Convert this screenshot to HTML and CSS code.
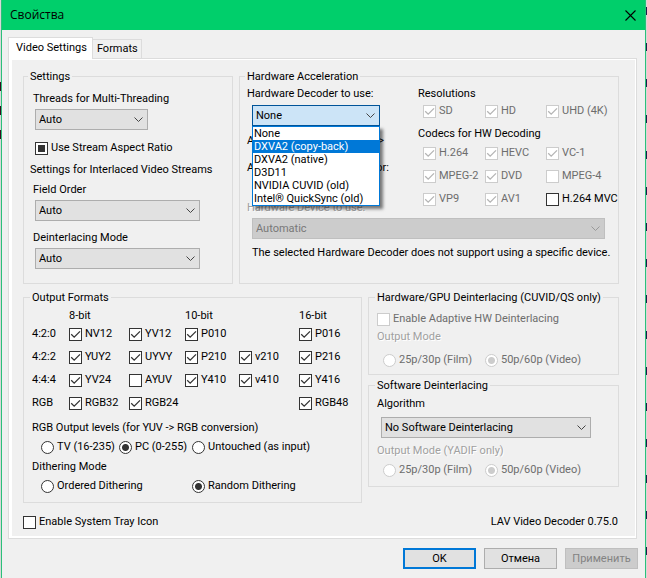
FILE: index.html
```html
<!DOCTYPE html>
<html lang="ru">

<head>
    <meta charset="UTF-8">
    <meta name="viewport" content="width=device-width, initial-scale=1.0">
    <title>Свойства</title>
    <link rel="stylesheet" href="styles.css">
</head>

<body>
    <div class="window">
        <header class="titlebar">
            <h1>Свойства</h1>
            <button type="button" class="close" aria-label="Закрыть">
                <svg width="11" height="11" viewBox="0 0 11 11">
                    <path d="M0.5 0.5 L10.5 10.5 M10.5 0.5 L0.5 10.5" stroke="#000" stroke-width="1.1" fill="none" />
                </svg>
            </button>
        </header>

        <div class="tabs">
            <button type="button" class="tab active">Video Settings</button>
            <button type="button" class="tab">Formats</button>
        </div>

        <main class="panel">
            <div class="top-row">
                <fieldset class="settings">
                    <legend>Settings</legend>
                    <label class="title" for="threads">Threads for Multi-Threading</label>
                    <select id="threads" class="short">
                        <option>Auto</option>
                    </select>
                    <label class="check aspect"><input type="checkbox" id="aspect">Use Stream Aspect Ratio</label>
                    <p class="interlaced">Settings for Interlaced Video Streams</p>
                    <label class="title" for="fieldOrder">Field Order</label>
                    <select id="fieldOrder">
                        <option>Auto</option>
                    </select>
                    <label class="title spaced" for="deintMode">Deinterlacing Mode</label>
                    <select id="deintMode">
                        <option>Auto</option>
                    </select>
                </fieldset>

                <fieldset class="hardware">
                    <legend>Hardware Acceleration</legend>
                    <div class="hw-columns">
                        <div class="decoder">
                            <label for="decoder">Hardware Decoder to use:</label>
                            <div class="combo">
                                <select id="decoder" class="open">
                                    <option>None</option>
                                </select>
                                <ul class="menu">
                                    <li>None</li>
                                    <li class="selected">DXVA2 (copy-back)</li>
                                    <li>DXVA2 (native)</li>
                                    <li>D3D11</li>
                                    <li>NVIDIA CUVID (old)</li>
                                    <li>Intel® QuickSync (old)</li>
                                </ul>
                            </div>
                            <p class="status"><span>Active Decoder:</span><span>&lt;inactive&gt;</span></p>
                            <p class="status">Active Hardware Accelerator:</p>
                            <label class="etched device-label" for="device">Hardware Device to use:</label>
                        </div>
                        <div>
                            <p>Resolutions</p>
                            <div class="codec-grid resolutions">
                                <label class="check"><input type="checkbox" checked disabled>SD</label>
                                <label class="check"><input type="checkbox" checked disabled>HD</label>
                                <label class="check"><input type="checkbox" checked disabled>UHD (4K)</label>
                            </div>
                            <p>Codecs for HW Decoding</p>
                            <div class="codec-grid codecs">
                                <label class="check"><input type="checkbox" checked disabled>H.264</label>
                                <label class="check"><input type="checkbox" checked disabled>HEVC</label>
                                <label class="check"><input type="checkbox" checked disabled>VC-1</label>
                                <label class="check"><input type="checkbox" checked disabled>MPEG-2</label>
                                <label class="check"><input type="checkbox" checked disabled>DVD</label>
                                <label class="check"><input type="checkbox" disabled>MPEG-4</label>
                                <label class="check"><input type="checkbox" checked disabled>VP9</label>
                                <label class="check"><input type="checkbox" checked disabled>AV1</label>
                                <label class="check"><input type="checkbox">H.264 MVC</label>
                            </div>
                        </div>
                    </div>
                    <select id="device" class="device" disabled>
                        <option>Automatic</option>
                    </select>
                    <p class="note">The selected Hardware Decoder does not support using a specific device.</p>
                </fieldset>
            </div>

            <div class="bottom-row">
                <fieldset class="output">
                    <legend>Output Formats</legend>
                    <div class="formats">
                        <span class="eight">8-bit</span>
                        <span class="ten">10-bit</span>
                        <span class="sixteen">16-bit</span>

                        <span class="row-name">4:2:0</span>
                        <label class="check"><input type="checkbox" checked>NV12</label>
                        <label class="check"><input type="checkbox" checked>YV12</label>
                        <label class="check"><input type="checkbox" checked>P010</label>
                        <label class="check sixteen"><input type="checkbox" checked>P016</label>

                        <span class="row-name">4:2:2</span>
                        <label class="check"><input type="checkbox" checked>YUY2</label>
                        <label class="check"><input type="checkbox" checked>UYVY</label>
                        <label class="check"><input type="checkbox" checked>P210</label>
                        <label class="check"><input type="checkbox" checked>v210</label>
                        <label class="check"><input type="checkbox" checked>P216</label>

                        <span class="row-name">4:4:4</span>
                        <label class="check"><input type="checkbox" checked>YV24</label>
                        <label class="check"><input type="checkbox">AYUV</label>
                        <label class="check"><input type="checkbox" checked>Y410</label>
                        <label class="check"><input type="checkbox" checked>v410</label>
                        <label class="check"><input type="checkbox" checked>Y416</label>

                        <span class="row-name">RGB</span>
                        <label class="check"><input type="checkbox" checked>RGB32</label>
                        <label class="check"><input type="checkbox" checked>RGB24</label>
                        <label class="check sixteen"><input type="checkbox" checked>RGB48</label>
                    </div>
                    <p class="levels-title">RGB Output levels (for YUV -&gt; RGB conversion)</p>
                    <div class="radios levels">
                        <label class="check"><input type="radio" name="levels">TV (16-235)</label>
                        <label class="check"><input type="radio" name="levels" checked>PC (0-255)</label>
                        <label class="check"><input type="radio" name="levels">Untouched (as input)</label>
                    </div>
                    <p>Dithering Mode</p>
                    <div class="radios dithering">
                        <label class="check"><input type="radio" name="dither">Ordered Dithering</label>
                        <label class="check"><input type="radio" name="dither" checked>Random Dithering</label>
                    </div>
                </fieldset>

                <div class="deint">
                    <fieldset class="hw-deint">
                        <legend>Hardware/GPU Deinterlacing (CUVID/QS only)</legend>
                        <label class="check"><input type="checkbox" disabled>Enable Adaptive HW Deinterlacing</label>
                        <p class="etched">Output Mode</p>
                        <div class="modes">
                            <label class="check"><input type="radio" name="hwMode" disabled>25p/30p (Film)</label>
                            <label class="check"><input type="radio" name="hwMode" checked disabled>50p/60p (Video)</label>
                        </div>
                    </fieldset>
                    <fieldset class="sw-deint">
                        <legend>Software Deinterlacing</legend>
                        <label for="algorithm">Algorithm</label>
                        <select id="algorithm" class="algorithm">
                            <option>No Software Deinterlacing</option>
                        </select>
                        <p class="etched">Output Mode (YADIF only)</p>
                        <div class="modes">
                            <label class="check"><input type="radio" name="swMode" disabled>25p/30p (Film)</label>
                            <label class="check"><input type="radio" name="swMode" checked disabled>50p/60p (Video)</label>
                        </div>
                    </fieldset>
                </div>
            </div>

            <div class="panel-footer">
                <label class="check"><input type="checkbox">Enable System Tray Icon</label>
                <span class="version">LAV Video Decoder 0.75.0</span>
            </div>
        </main>

        <footer class="buttons">
            <button type="button" class="btn primary">OK</button>
            <button type="button" class="btn">Отмена</button>
            <button type="button" class="btn" disabled>Применить</button>
        </footer>
    </div>

    <script>
        document.getElementById("aspect").indeterminate = true;
    </script>
</body>

</html>
```
FILE: styles.css
```css
* {
    box-sizing: border-box;
}

/* the desktop shows as a thin strip on both sides of the window */
body {
    margin: 0;
    padding: 0 1px;
    background-color: #d8d8d8;
    background-image:
        linear-gradient(#3a0a1e 9px, transparent 9px, transparent 24px, #3a0a1e 24px, #3a0a1e 33px, transparent 33px, transparent 48px, #3a0a1e 48px),
        linear-gradient(#1c1c4a 8px, transparent 8px);
    background-size: 1px 57px, 1px 36px;
    background-position: 0 82px, right 7px;
    background-repeat: no-repeat, repeat-y;
    font-family: Roboto, "Liberation Sans", sans-serif;
    font-size: 11px;
    line-height: 14px;
    color: #000;
    white-space: nowrap;
}

button,
select {
    font: inherit;
    color: inherit;
}

p,
ul {
    margin: 0;
    padding: 0;
}

label,
p {
    display: block;
}

.window {
    min-height: 100vh;
    padding-bottom: 7px;
    background-color: #f0f0f0;
    border: 1px solid #2bc07a;
    border-top: none;
    border-bottom: none;
}

.titlebar {
    display: flex;
    justify-content: space-between;
    align-items: center;
    height: 30px;
    padding: 0 9px 0 8px;
    background-color: #00cf6b;
}

.titlebar h1 {
    margin: 0;
    font-family: "Open Sans", sans-serif;
    font-size: 12px;
    font-weight: normal;
}

.close {
    display: flex;
    padding: 0;
    border: none;
    background: none;
}

/* tabs */
.tabs {
    display: flex;
    align-items: flex-end;
    padding: 7px 0 0 6px;
}

.tab {
    height: 19px;
    padding: 0 3px 0 4px;
    border: 1px solid #dcdcdc;
    border-left: none;
    border-bottom: none;
    background-color: #f0f0f0;
}

.tab.active {
    position: relative;
    height: 22px;
    margin-bottom: -1px;
    padding: 0 5px 2px 7px;
    border-left: 1px solid #dcdcdc;
    background-color: #fff;
}

.panel {
    margin: 0 8px 0 6px;
    padding: 10px 17px 9px 14px;
    border: 1px solid #dcdcdc;
    background-color: #f0f0f0;
    box-shadow: inset 3px 1px #fff, inset -1px -2px #fff;
}

/* group boxes */
fieldset {
    min-width: 0;
    margin: 0;
    padding: 0;
    border: 1px solid #dcdcdc;
}

legend {
    height: 15px;
    margin-left: -2px;
    padding: 1px 2px 0;
}

.top-row {
    display: grid;
    grid-template-columns: 210px 1fr;
    gap: 6px;
}

.bottom-row {
    display: grid;
    grid-template-columns: 339px 1fr;
    gap: 6px;
    margin-top: 6px;
}

/* drop-downs */
select {
    display: block;
    width: 165px;
    height: 21px;
    padding: 0 3px;
    border: 1px solid #adadad;
    border-radius: 0;
    appearance: none;
    background: #e1e1e1 url("data:image/svg+xml,%3Csvg xmlns='http://www.w3.org/2000/svg' width='9' height='5'%3E%3Cpath d='M.5 .5L4.5 4.5L8.5 .5' fill='none' stroke='%23444'/%3E%3C/svg%3E") no-repeat right 4px center;
}

select:disabled {
    border-color: #bfbfbf;
    background-color: #ccc;
    background-image: url("data:image/svg+xml,%3Csvg xmlns='http://www.w3.org/2000/svg' width='9' height='5'%3E%3Cpath d='M.5 .5L4.5 4.5L8.5 .5' fill='none' stroke='%23999'/%3E%3C/svg%3E");
    color: #787878;
    opacity: 1;
}

select.short {
    width: 113px;
}

select.open {
    width: 128px;
    border-color: #005499;
    background-color: #cce4f7;
}

.combo {
    position: relative;
    width: 128px;
    margin: 4px 0 8px 5px;
}

.menu {
    position: absolute;
    top: 21px;
    left: 0;
    right: 0;
    z-index: 1;
    border: 1px solid #0078d7;
    background-color: #fff;
    box-shadow: 3px 3px 3px rgba(0, 0, 0, 0.5);
    list-style: none;
    line-height: 12px;
}

.menu li {
    padding: 1px 0 0 1px;
}

.menu .selected {
    background-color: #0078d7;
    color: #fff;
}

/* tick boxes and radios */
.check {
    display: flex;
    align-items: center;
    gap: 3px;
    height: 14px;
}

.check:has(:disabled) {
    color: #6d6d6d;
}

input {
    flex: none;
    width: 13px;
    height: 13px;
    margin: 0;
    border: 1px solid #333;
    appearance: none;
    background: #fff no-repeat center;
}

input:disabled {
    border-color: #ccc;
}

input[type="checkbox"]:checked {
    background-image: url("data:image/svg+xml,%3Csvg xmlns='http://www.w3.org/2000/svg' width='11' height='11'%3E%3Cpath d='M1.2 5.2L4.2 8.2L10 2.4' fill='none' stroke='%23333' stroke-width='1.3'/%3E%3C/svg%3E");
}

input[type="checkbox"]:checked:disabled {
    background-image: url("data:image/svg+xml,%3Csvg xmlns='http://www.w3.org/2000/svg' width='11' height='11'%3E%3Cpath d='M1.2 5.2L4.2 8.2L10 2.4' fill='none' stroke='%23b4b4b4' stroke-width='1.3'/%3E%3C/svg%3E");
}

input:indeterminate[type="checkbox"] {
    background-image: linear-gradient(#333, #333);
    background-size: 7px 7px;
}

input[type="radio"] {
    border-radius: 50%;
}

input[type="radio"]:checked {
    background-image: radial-gradient(circle, #333 3px, transparent 4px);
}

input[type="radio"]:checked:disabled {
    background-image: radial-gradient(circle, #ccc 3px, transparent 4px);
}

.etched {
    color: #a0a0a0;
    text-shadow: 1px 1px #fff;
}

/* Settings */
.settings {
    padding: 8px 6px 14px;
}

.settings .title {
    margin: 0 0 3px 3px;
}

.settings .title.spaced {
    margin-top: 10px;
}

.settings select,
.aspect {
    margin-left: 5px;
}

.aspect {
    margin-top: 11px;
}

.interlaced {
    margin: 8px 0 6px;
}

/* Hardware Acceleration */
.hardware {
    padding: 3px 0 0 7px;
}

.hw-columns {
    display: grid;
    grid-template-columns: 171px 1fr;
}

.status {
    display: flex;
    justify-content: space-between;
    width: 137px;
    margin-bottom: 13px;
}

.device-label {
    margin-top: 26px;
}

.codec-grid {
    display: grid;
    grid-template-columns: 62px 61px 1fr;
    row-gap: 9px;
    padding-left: 5px;
}

.resolutions {
    margin: 3px 0 9px;
}

.codecs {
    margin-top: 5px;
}

.device {
    width: auto;
    min-width: calc(100% - 18px);
    margin: 3px 13px 7px 5px;
}

.note {
    margin-left: 5px;
}

/* Output Formats */
.output {
    padding: 4px 0 9px 8px;
}

.formats {
    display: grid;
    grid-template-columns: 37px 60px 56px 54px 60px 1fr;
    row-gap: 9px;
}

.formats > span:not(.row-name) {
    margin-bottom: -5px;
}

.eight {
    grid-column: 2;
}

.ten {
    grid-column: 4;
}

.sixteen {
    grid-column: 6;
}

.row-name {
    grid-column: 1;
}

.levels-title {
    margin-top: 11px;
}

.radios {
    display: grid;
    grid-template-columns: 78px 73px 1fr;
    margin: 5px 0 6px;
    padding-left: 9px;
}

.dithering {
    grid-template-columns: 151px 1fr;
    margin-bottom: 0;
}

/* Deinterlacing groups */
.deint {
    display: flex;
    flex-direction: column;
    gap: 3px;
}

.hw-deint {
    padding: 7px 0 7px 8px;
}

.hw-deint .etched {
    margin: 4px 0 9px;
}

.sw-deint {
    padding: 4px 0 9px 8px;
}

.algorithm {
    width: 210px;
    margin: 6px 0 6px 4px;
}

.sw-deint .etched {
    margin-bottom: 5px;
}

.modes {
    display: grid;
    grid-template-columns: 102px 1fr;
    padding-left: 6px;
}

.panel-footer {
    display: flex;
    justify-content: space-between;
    align-items: flex-end;
    margin-top: 12px;
}

.version {
    padding-right: 1px;
}

.buttons {
    display: flex;
    justify-content: flex-end;
    gap: 8px;
    padding: 9px 7px 0;
}

.btn {
    width: 73px;
    height: 21px;
    padding: 0;
    border: 1px solid #adadad;
    background-color: #e1e1e1;
}

.btn.primary {
    border: 2px solid #0078d7;
}

.btn:disabled {
    border-color: #bfbfbf;
    background-color: #ccc;
    color: #838383;
}
```
